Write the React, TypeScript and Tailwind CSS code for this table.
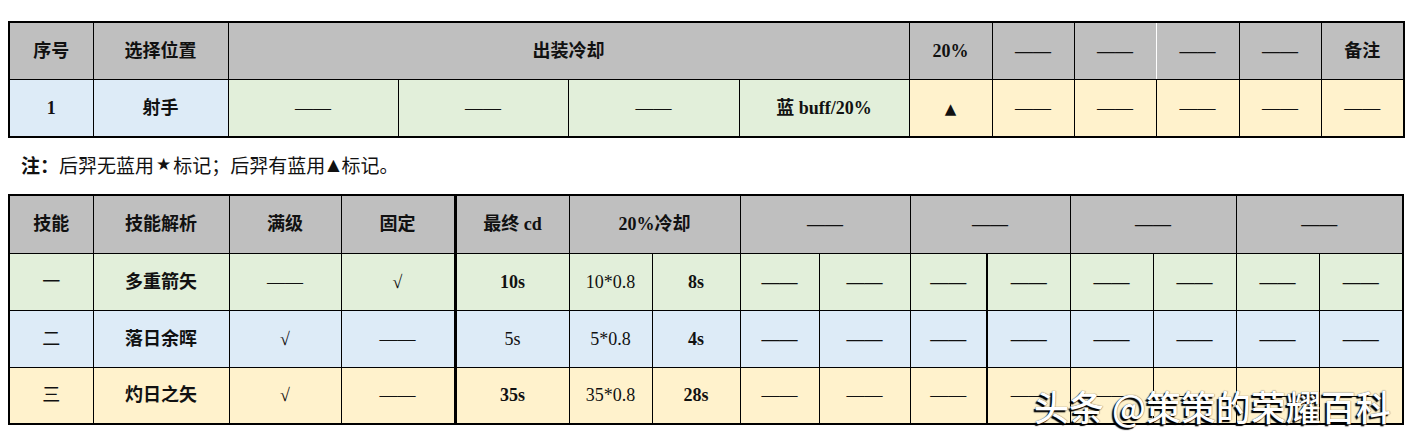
import React from "react";

type CellProps = {
  children?: React.ReactNode;
  bg: string;
  bold?: boolean;
  colSpan?: number;
  className?: string;
};

function C({ children, bg, bold, colSpan, className = "" }: CellProps) {
  return (
    <td
      colSpan={colSpan}
      className={`border border-black p-0 text-center align-middle text-[18px] leading-none text-[#111] ${bg} ${bold ? "font-bold" : "font-normal"} ${className}`}
    >
      {children}
    </td>
  );
}

const GRAY = "bg-[#bfbfbf]";
const GREEN = "bg-[#e2efda]";
const BLUE = "bg-[#ddebf7]";
const YELLOW = "bg-[#fff2cc]";
const D = "——";

const t1Cols = [84, 135, 170, 170, 171, 170, 83, 82, 82, 83, 82, 83];
const t2Cols = [84, 136, 112, 114, 114, 83, 88, 79, 91, 77, 83, 83, 83, 83, 84];

type SkillRow = {
  no: string;
  name: string;
  full: string;
  fixed: string;
  cd: string;
  cdBold: boolean;
  calc: string;
  res: string;
  bg: string;
  dashBold: boolean;
};

const rows: SkillRow[] = [
  { no: "一", name: "多重箭矢", full: D, fixed: "√", cd: "10s", cdBold: true, calc: "10*0.8", res: "8s", bg: GREEN, dashBold: true },
  { no: "二", name: "落日余晖", full: "√", fixed: D, cd: "5s", cdBold: false, calc: "5*0.8", res: "4s", bg: BLUE, dashBold: true },
  { no: "三", name: "灼日之矢", full: "√", fixed: D, cd: "35s", cdBold: true, calc: "35*0.8", res: "28s", bg: YELLOW, dashBold: false },
];

export default function App() {
  return (
    <div className="relative w-[1414px] h-[439px] overflow-hidden bg-white pt-[21px] pl-[8px] [font-family:'Liberation_Serif','Noto_Sans_CJK_SC',serif]">
      <table className="w-[1395px] table-fixed border-collapse border-2 border-black">
        <colgroup>
          {t1Cols.map((w, i) => (
            <col key={i} style={{ width: w }} />
          ))}
        </colgroup>
        <tbody>
          <tr className="h-[57px]">
            <C bg={GRAY} bold>序号</C>
            <C bg={GRAY} bold>选择位置</C>
            <C bg={GRAY} bold colSpan={4}>出装冷却</C>
            <C bg={GRAY} bold>20%</C>
            <C bg={GRAY} bold>{D}</C>
            <C bg={GRAY} bold className="border-r-white">{D}</C>
            <C bg={GRAY} bold>{D}</C>
            <C bg={GRAY} bold>{D}</C>
            <C bg={GRAY} bold>备注</C>
          </tr>
          <tr className="h-[58px]">
            <C bg={BLUE} bold>1</C>
            <C bg={BLUE} bold>射手</C>
            <C bg={GREEN}>{D}</C>
            <C bg={GREEN}>{D}</C>
            <C bg={GREEN}>{D}</C>
            <C bg={GREEN} bold>蓝 buff/20%</C>
            <C bg={YELLOW} bold>
              <span className="text-[15px] [font-family:'DejaVu_Sans',sans-serif]">▲</span>
            </C>
            <C bg={YELLOW}>{D}</C>
            <C bg={YELLOW}>{D}</C>
            <C bg={YELLOW}>{D}</C>
            <C bg={YELLOW}>{D}</C>
            <C bg={YELLOW}>{D}</C>
          </tr>
        </tbody>
      </table>

      <div className="flex h-[56px] items-center pl-[13px] pb-[2px] text-[19px] text-[#111] [font-family:'Noto_Sans_CJK_SC',sans-serif]">
        <span className="font-bold">注：</span>
        <span>后羿无蓝用</span>
        <span className="px-[2px] text-[17px] [font-family:'DejaVu_Sans',sans-serif]">★</span>
        <span>标记；后羿有蓝用</span>
        <span className="px-[2px] text-[16px] [font-family:'DejaVu_Sans',sans-serif]">▲</span>
        <span>标记。</span>
      </div>

      <table className="w-[1394px] table-fixed border-collapse border-2 border-black">
        <colgroup>
          {t2Cols.map((w, i) => (
            <col key={i} style={{ width: w }} />
          ))}
        </colgroup>
        <tbody>
          <tr className="h-[58px]">
            <C bg={GRAY} bold>技能</C>
            <C bg={GRAY} bold>技能解析</C>
            <C bg={GRAY} bold>满级</C>
            <C bg={GRAY} bold>固定</C>
            <C bg={GRAY} bold className="border-l-[3px]">最终 cd</C>
            <C bg={GRAY} bold colSpan={2}>20%冷却</C>
            <C bg={GRAY} bold colSpan={2}>{D}</C>
            <C bg={GRAY} bold colSpan={2}>{D}</C>
            <C bg={GRAY} bold colSpan={2}>{D}</C>
            <C bg={GRAY} bold colSpan={2}>{D}</C>
          </tr>
          {rows.map((r, i) => (
            <tr key={i} className="h-[57px]">
              <C bg={r.bg}>{r.no}</C>
              <C bg={r.bg} bold>{r.name}</C>
              <C bg={r.bg}>{r.full}</C>
              <C bg={r.bg}>{r.fixed}</C>
              <C bg={r.bg} bold={r.cdBold} className="border-l-[3px]">{r.cd}</C>
              <C bg={r.bg}>{r.calc}</C>
              <C bg={r.bg} bold>{r.res}</C>
              {Array.from({ length: 8 }).map((_, j) => (
                <C key={j} bg={r.bg} bold={r.dashBold} className={j === 3 ? "border-l-2" : ""}>
                  {D}
                </C>
              ))}
            </tr>
          ))}
        </tbody>
      </table>

      <div className="absolute left-[1034px] top-[388px] whitespace-nowrap text-[35px] font-medium leading-none text-white [font-family:'Noto_Sans_CJK_SC',sans-serif] [text-shadow:-2px_2px_1px_#000,0_0_1px_#222]">
        头条 @策策的荣耀百科
      </div>
    </div>
  );
}
